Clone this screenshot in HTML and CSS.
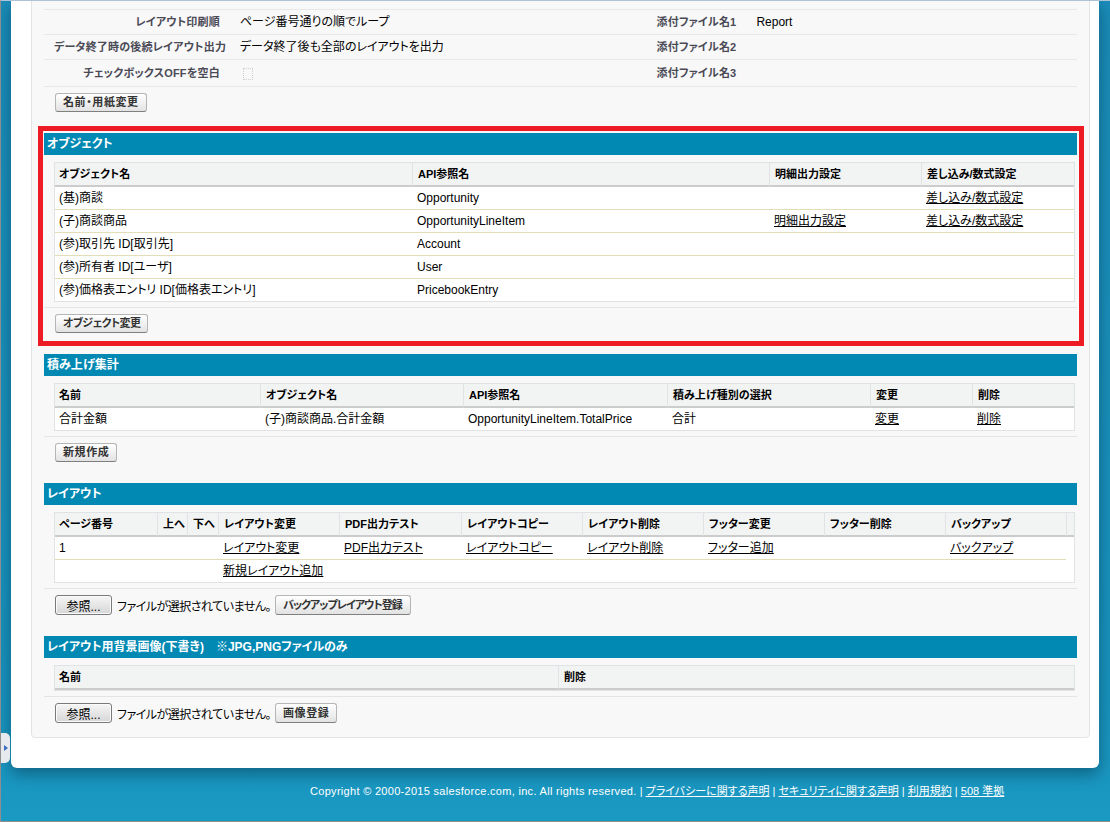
FILE: index.html
```html
<!DOCTYPE html>
<html lang="ja">
<head>
<meta charset="utf-8">
<title>レイアウト</title>
<link rel="stylesheet" href="styles.css">
</head>
<body>
<div class="window">
  <div class="sidetab"><span class="tri"></span></div>
  <div class="panel">
    <div class="box">
      <table class="detail">
        <colgroup><col class="dl"><col class="dv"><col class="dl"><col class="dv"></colgroup>
        <tr><td class="lbl">&nbsp;</td><td class="val"></td><td class="lbl"></td><td class="val"></td></tr>
        <tr><td class="lbl">レイアウト印刷順</td><td class="val">ページ番号通りの順でループ</td><td class="lbl">添付ファイル名1</td><td class="val">Report</td></tr>
        <tr><td class="lbl">データ終了時の後続レイアウト出力</td><td class="val">データ終了後も全部のレイアウトを出力</td><td class="lbl">添付ファイル名2</td><td class="val"></td></tr>
        <tr class="tall"><td class="lbl">チェックボックスOFFを空白</td><td class="val"><span class="cb"></span></td><td class="lbl">添付ファイル名3</td><td class="val"></td></tr>
      </table>
      <div class="btnrow"><button class="btn wide">名前・用紙変更</button></div>

      <section class="sec hl">
        <div class="bar">オブジェクト</div>
        <div class="pbody">
          <table class="list">
            <colgroup><col class="w357"><col class="w357"><col class="w152"><col></colgroup>
            <tr><th>オブジェクト名</th><th>API参照名</th><th>明細出力設定</th><th>差し込み/数式設定</th></tr>
            <tr><td>(基)商談</td><td>Opportunity</td><td></td><td><a href="#">差し込み/数式設定</a></td></tr>
            <tr><td>(子)商談商品</td><td>OpportunityLineItem</td><td><a href="#">明細出力設定</a></td><td><a href="#">差し込み/数式設定</a></td></tr>
            <tr><td>(参)取引先 ID[取引先]</td><td>Account</td><td></td><td></td></tr>
            <tr><td>(参)所有者 ID[ユーザ]</td><td>User</td><td></td><td></td></tr>
            <tr><td>(参)価格表エントリ ID[価格表エントリ]</td><td>PricebookEntry</td><td></td><td></td></tr>
          </table>
        </div>
        <div class="pfoot"><button class="btn narrow">オブジェクト変更</button></div>
      </section>

      <section class="sec">
        <div class="bar">積み上げ集計</div>
        <div class="pbody">
          <table class="list">
            <colgroup><col class="w205"><col class="w203"><col class="w204"><col class="w203"><col class="w102"><col></colgroup>
            <tr><th>名前</th><th>オブジェクト名</th><th>API参照名</th><th>積み上げ種別の選択</th><th>変更</th><th>削除</th></tr>
            <tr><td>合計金額</td><td>(子)商談商品.合計金額</td><td>OpportunityLineItem.TotalPrice</td><td>合計</td><td><a href="#">変更</a></td><td><a href="#">削除</a></td></tr>
          </table>
        </div>
        <div class="pfoot"><button class="btn wide">新規作成</button></div>
      </section>

      <section class="sec">
        <div class="bar">レイアウト</div>
        <div class="pbody">
          <table class="list">
            <colgroup><col class="w102"><col class="w30"><col class="w31"><col class="w121"><col class="w122"><col class="w121"><col class="w121"><col class="w121"><col class="w121"><col class="w121"><col></colgroup>
            <tr><th>ページ番号</th><th>上へ</th><th>下へ</th><th>レイアウト変更</th><th>PDF出力テスト</th><th>レイアウトコピー</th><th>レイアウト削除</th><th>フッター変更</th><th>フッター削除</th><th>バックアップ</th><th></th></tr>
            <tr><td>1</td><td></td><td></td><td><a href="#">レイアウト変更</a></td><td><a href="#">PDF出力テスト</a></td><td><a href="#">レイアウトコピー</a></td><td><a href="#">レイアウト削除</a></td><td><a href="#">フッター追加</a></td><td></td><td><a href="#">バックアップ</a></td></tr>
            <tr><td></td><td></td><td></td><td><a href="#">新規レイアウト追加</a></td><td></td><td></td><td></td><td></td><td></td><td></td></tr>
          </table>
        </div>
        <div class="pfoot filerow"><button class="browse">参照...</button><span class="nofile">ファイルが選択されていません。</span><button class="btn tight">バックアップレイアウト登録</button></div>
      </section>

      <section class="sec">
        <div class="bar">レイアウト用背景画像(下書き)　※JPG,PNGファイルのみ</div>
        <div class="pbody">
          <table class="list">
            <colgroup><col class="w503"><col></colgroup>
            <tr><th>名前</th><th>削除</th></tr>
          </table>
        </div>
        <div class="pfoot filerow"><button class="browse">参照...</button><span class="nofile">ファイルが選択されていません。</span><button class="btn wide">画像登録</button></div>
      </section>
    </div>
  </div>
  <div class="footer"><span class="copy">Copyright © 2000-2015 salesforce.com, inc. All rights reserved.</span> | <a href="#">プライバシーに関する声明</a> | <a href="#">セキュリティに関する声明</a> | <a href="#">利用規約</a> | <a href="#">508 準拠</a></div>
</div>
</body>
</html>
```

FILE: styles.css
```css
* { box-sizing: border-box; }
html, body { margin: 0; padding: 0; }
body {
  width: 1110px;
  height: 822px;
  overflow: hidden;
  font-family: "Liberation Sans", "Noto Sans CJK JP", sans-serif;
  font-size: 12px;
  color: #000;
  font-feature-settings: "palt";
}
a { color: #000; text-decoration: underline; }

.window {
  position: relative;
  width: 1110px;
  height: 822px;
  border-top: 1px solid #aec2d8;
  border-left: 1px solid #8e8e8e;
  border-bottom: 1px solid #8e8e8e;
  background: linear-gradient(180deg, #1a8cb8 0%, #1893bd 85%, #1a99c3 100%);
  overflow: hidden;
}

.sidetab {
  position: absolute;
  left: 0;
  top: 732px;
  width: 9px;
  height: 30px;
  background: #e6eaef;
  border-radius: 0 5px 5px 0;
  display: flex;
  align-items: center;
  justify-content: center;
}
.tri {
  width: 0;
  height: 0;
  border-top: 3px solid transparent;
  border-bottom: 3px solid transparent;
  border-left: 4px solid #3b6cc0;
}

.panel {
  margin-left: 10px;
  width: 1088px;
  height: 767px;
  background: #fff;
  border-radius: 0 0 6px 6px;
  padding: 0 9px 0 20px;
  box-shadow: 0 6px 16px rgba(0, 35, 55, 0.45);
  overflow: hidden;
}

.box {
  margin-top: -17px;
  background: #f8f8f8;
  border: 1px solid #e3e3e3;
  border-radius: 0 0 4px 4px;
  padding: 0 12px 14px 12px;
}

/* detail list */
.detail {
  width: 100%;
  border-collapse: separate;
  border-spacing: 0;
  table-layout: fixed;
}
.detail .dl { width: 18%; }
.detail .dv { width: 32%; }
.detail td {
  padding: 5px 10px;
  line-height: 14px;
  border-bottom: 1px solid #e8e8e8;
  white-space: nowrap;
  vertical-align: middle;
}
.detail .tall td { padding-top: 6px; padding-bottom: 6px; }
.detail .lbl {
  text-align: right;
  font-size: 11px;
  font-weight: bold;
  color: #4a4a56;
  padding-right: 10px;
  letter-spacing: 0.2px;
}
.detail .val { font-size: 12px; }
.cb {
  display: inline-block;
  width: 10px;
  height: 12px;
  margin-left: 3px;
  border: 1px dotted #cfcfcf;
  vertical-align: middle;
}

.btnrow { padding: 6px 0 0 11px; }

.btn {
  height: 19px;
  margin: 0;
  padding: 0 7px 0 7px;
  font-family: inherit;
  font-size: 11px;
  font-weight: bold;
  line-height: 17px;
  color: #333;
  letter-spacing: 0;
  border: 1px solid #b5b5b5;
  border-bottom-color: #7f7f7f;
  border-radius: 3px;
  background: linear-gradient(180deg, #ffffff 0%, #f1f1f1 50%, #e2e2e2 100%);
  font-feature-settings: "palt";
}
.btn.wide { letter-spacing: 0.6px; }
.btn.narrow { letter-spacing: -0.6px; }
.btn.tight { letter-spacing: -1px; padding: 0 8px 0 7px; }

/* sections */
.sec { position: relative; margin-top: 21px; }
.hl::after {
  content: "";
  position: absolute;
  left: -6px;
  top: -7px;
  right: -7px;
  bottom: -13px;
  border: 5px solid #ed1c24;
  pointer-events: none;
}
.bar {
  height: 22px;
  line-height: 22px;
  padding-left: 3px;
  background: #0189b3;
  color: #fff;
  font-size: 12px;
  font-weight: bold;
  white-space: nowrap;
}
.pbody { padding: 7px 2px 5px 10px; }
.pfoot {
  border-top: 1px solid #e4e4e4;
  padding: 6px 0 0 11px;
}
.filerow {
  display: flex;
  align-items: center;
}
.filerow .btn { height: 20px; line-height: 18px; }
.browse {
  width: 57px;
  height: 20px;
  padding: 0;
  margin: 0;
  font-family: inherit;
  font-size: 12px;
  color: #000;
  border: 1px solid #7a7a7a;
  border-radius: 3px;
  background: linear-gradient(180deg, #f6f6f6 0%, #e6e6e6 50%, #d6d6d6 100%);
  box-shadow: inset 0 0 0 1px #fbfbfb;
}
.nofile {
  margin: 0 4px 0 5px;
  font-size: 12px;
  letter-spacing: -0.5px;
  white-space: nowrap;
}

/* list tables */
.list {
  width: 100%;
  border-collapse: separate;
  border-spacing: 0;
  table-layout: fixed;
  background: #fff;
  border: 1px solid #e0e3e5;
}
.list th {
  background: #f2f3f3;
  font-size: 11px;
  font-weight: bold;
  text-align: left;
  padding: 4px 2px 4px 5px;
  line-height: 14px;
  border-bottom: 2px solid #cccccc;
  border-left: 1px solid #e0e3e5;
  white-space: nowrap;
  overflow: hidden;
}
.list th:first-child { border-left: 0; padding-left: 4px; }
.list td {
  padding: 4px 2px 4px 5px;
  line-height: 14px;
  font-size: 12px;
  border-bottom: 1px solid #e3deb8;
  white-space: nowrap;
  overflow: hidden;
}
.list td:first-child { padding-left: 4px; }
.list tr:last-child td { border-bottom: 0; }

.w357 { width: 357px; }
.w152 { width: 152px; }
.w205 { width: 205px; }
.w203 { width: 203px; }
.w204 { width: 204px; }
.w102 { width: 102px; }
.w30 { width: 30px; }
.w31 { width: 31px; }
.w121 { width: 121px; }
.w122 { width: 122px; }
.w503 { width: 503px; }

.footer {
  padding: 16px 0 0 309px;
  font-size: 11px;
  line-height: 14px;
  color: #fff;
  white-space: nowrap;
}
.footer .copy { letter-spacing: 0.3px; }
.footer a { color: #fff; }
```
